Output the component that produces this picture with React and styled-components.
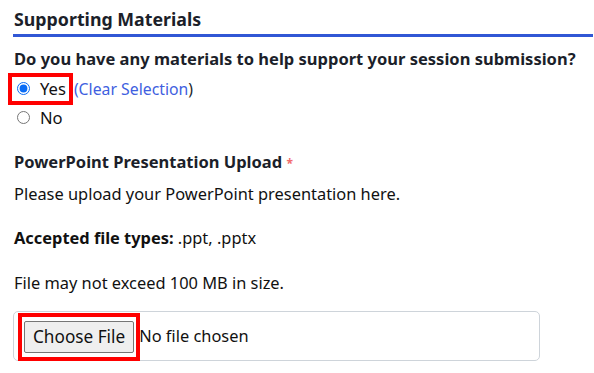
import React from 'react'
import styled, { createGlobalStyle } from 'styled-components'

const GlobalStyle = createGlobalStyle`
  html, body {
    margin: 0;
    padding: 0;
    background: #fff;
  }
  body {
    font-family: "Noto Sans", "Open Sans", sans-serif;
    color: #212529;
  }
`

export default function App() {
  return (
    <>
      <GlobalStyle />
      <Section>
        <SectionTitle>Supporting Materials</SectionTitle>

        <Question>Do you have any materials to help support your session submission?</Question>
        <Choices>
          <RadioRow>
            <Highlight>
              <Radio type="radio" name="materials" defaultChecked />
              <RadioLabel>Yes</RadioLabel>
            </Highlight>
            <ClearLink href="#">
              (Clear Selection<Paren>)</Paren>
            </ClearLink>
          </RadioRow>
          <RadioRow>
            <Plain>
              <Radio type="radio" name="materials" />
              <RadioLabel>No</RadioLabel>
            </Plain>
          </RadioRow>
        </Choices>

        <FieldTitle>
          PowerPoint Presentation Upload <Required>*</Required>
        </FieldTitle>
        <Text>Please upload your PowerPoint presentation here.</Text>
        <Text $gap={22}>
          <strong>Accepted file types:</strong> .ppt, .pptx
        </Text>
        <Text $gap={23}>File may not exceed 100 MB in size.</Text>

        <FileBox>
          <ButtonMark>
            <FileButton type="button">Choose File</FileButton>
          </ButtonMark>
          <FileName>No file chosen</FileName>
        </FileBox>
      </Section>
    </>
  )
}

const Section = styled.section`
  width: 580px;
  padding-left: 13px;
`

const SectionTitle = styled.h2`
  margin: 0;
  padding: 6px 0 2px 1px;
  font-size: 17.8px;
  line-height: 26px;
  font-weight: 700;
  color: #1c1f2a;
  border-bottom: 3px solid #3157d5;
`

const Question = styled.div`
  margin-top: 10px;
  padding-left: 1px;
  font-size: 16.5px;
  line-height: 24px;
  font-weight: 700;
  color: #1c1f2a;
`

const Choices = styled.div`
  margin-top: 3px;
`

const RadioRow = styled.div`
  display: flex;
  align-items: center;
  height: 29px;
  margin-left: -5px;
`

const Highlight = styled.label`
  display: inline-flex;
  align-items: center;
  height: 24px;
  padding: 0 3px 0 1px;
  border: 4px solid #f00;
`

const Plain = styled.label`
  display: inline-flex;
  align-items: center;
  padding: 0 6px 0 5px;
`

const Radio = styled.input`
  width: 13px;
  height: 13px;
  margin: 0 10px 0 4px;
  accent-color: #0a6cf5;
`

const RadioLabel = styled.span`
  font-size: 16.6px;
  color: #111;
`

const ClearLink = styled.a`
  margin-left: 1px;
  font-size: 15.8px;
  color: #3f5fe0;
  text-decoration: none;
`

const Paren = styled.span`
  color: #1c1f2a;
`

const FieldTitle = styled.div`
  margin-top: 18px;
  padding-left: 1px;
  font-size: 16.5px;
  line-height: 24px;
  font-weight: 700;
  color: #1c1f2a;
`

const Required = styled.span`
  color: #f26b6b;
  font-size: 12px;
  vertical-align: middle;
`

const Text = styled.p`
  margin: ${({ $gap }) => $gap || 7}px 0 0;
  padding-left: 1px;
  font-size: 16.4px;
  line-height: 22px;
  color: #111;

  strong {
    font-weight: 700;
  }
`

const FileBox = styled.div`
  display: flex;
  align-items: flex-end;
  width: 521px;
  height: 48px;
  margin-top: 17px;
  padding-left: 4px;
  border: 1px solid #ced4da;
  border-radius: 5px;
  box-sizing: content-box;
`

const ButtonMark = styled.span`
  display: inline-flex;
  align-items: center;
  margin-bottom: -1px;
  padding: 4px 2px;
  border: 4px solid #f00;
`

const FileButton = styled.button`
  height: 32px;
  padding: 0 8px;
  font-family: "Noto Sans", sans-serif;
  font-size: 17.2px;
  color: #111;
  background: #efefef;
  border: 1px solid #767676;
  border-radius: 2px;
`

const FileName = styled.span`
  align-self: center;
  margin-left: -1px;
  font-size: 16.4px;
  color: #111;
`
